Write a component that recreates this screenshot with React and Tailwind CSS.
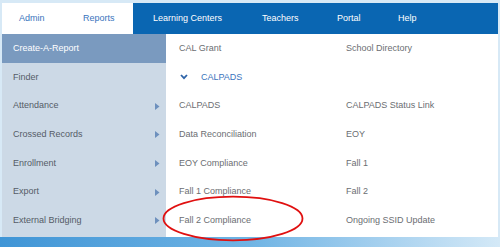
import React from "react";

const side = [
  ["Finder", false],
  ["Attendance", true],
  ["Crossed Records", true],
  ["Enrollment", true],
  ["Export", true],
  ["External Bridging", true],
];

const rows = [
  ["CALPADS", "CALPADS Status Link"],
  ["Data Reconciliation", "EOY"],
  ["EOY Compliance", "Fall 1"],
  ["Fall 1 Compliance", "Fall 2"],
  ["Fall 2 Compliance", "Ongoing SSID Update"],
];

function Tri() {
  return (
    <svg width="5" height="7" viewBox="0 0 5 7" className="mr-[6px]">
      <path d="M0 0 L4.5 3.5 L0 7 Z" fill="#6d90bd" />
    </svg>
  );
}

export default function App() {
  return (
    <div
      className="w-[500px] h-[247px] bg-[#d7e9f6] flex flex-col overflow-hidden text-[9px]"
      style={{ fontFamily: '"Liberation Sans", Arial, sans-serif' }}
    >
      <div className="h-[3px] shrink-0" />
      <div className="flex flex-1 pl-[2px] pr-[2px]">
        <div className="flex flex-col flex-1 bg-white">
          {/* nav */}
          <div className="flex h-[31px] shrink-0">
            <div className="w-[64px] flex items-center pl-[17px] pt-[1px] text-[#3a74bd] bg-white">Admin</div>
            <div className="w-[67px] flex items-center pl-[17px] pt-[1px] text-[#3a74bd] bg-white">Reports</div>
            <div className="flex-1 bg-[#0a66b2] flex items-center pt-[1px] text-white">
              <span className="ml-[20px] w-[109px]">Learning Centers</span>
              <span className="w-[75px]">Teachers</span>
              <span className="w-[61px]">Portal</span>
              <span>Help</span>
            </div>
          </div>
          <div className="flex flex-1">
            {/* sidebar */}
            <div className="w-[164px] bg-[#ccd9e6] flex flex-col">
              <div className="h-[29px] bg-[#7a9abf] text-white flex items-center pl-[11px]">Create-A-Report</div>
              {side.map(([t, a]) => (
                <div key={t} className="h-[28.7px] flex items-center justify-between pl-[11px] text-[#555c66]">
                  <span>{t}</span>
                  {a && <Tri />}
                </div>
              ))}
            </div>
            {/* content */}
            <div className="flex-1 flex flex-col relative text-[#6b6e72]">
              <div className="h-[29px] flex items-center">
                <span className="ml-[13px] w-[167px]">CAL Grant</span>
                <span>School Directory</span>
              </div>
              <div className="h-[28.7px] flex items-center text-[#3a74bd]">
                <svg width="8" height="6" viewBox="0 0 8 6" className="ml-[14px] mr-[13px]">
                  <path d="M1 1 L4 4.2 L7 1" stroke="#2e64a8" strokeWidth="1.8" fill="none" />
                </svg>
                <span>CALPADS</span>
              </div>
              {rows.map(([a, b]) => (
                <div key={a} className="h-[28.7px] flex items-center">
                  <span className="ml-[13px] w-[167px]">{a}</span>
                  <span>{b}</span>
                </div>
              ))}
              <svg
                className="absolute left-[-5px] top-[160px]"
                width="146"
                height="50"
                viewBox="0 0 146 50"
              >
                <ellipse cx="72" cy="24.5" rx="69.5" ry="21.8" stroke="#e01010" strokeWidth="1.8" fill="none" />
              </svg>
            </div>
          </div>
        </div>
      </div>
      <div className="h-[10px] shrink-0 bg-gradient-to-r from-[#3f95d6] via-[#6fb4e4] to-[#d4e9f7]" />
    </div>
  );
}
